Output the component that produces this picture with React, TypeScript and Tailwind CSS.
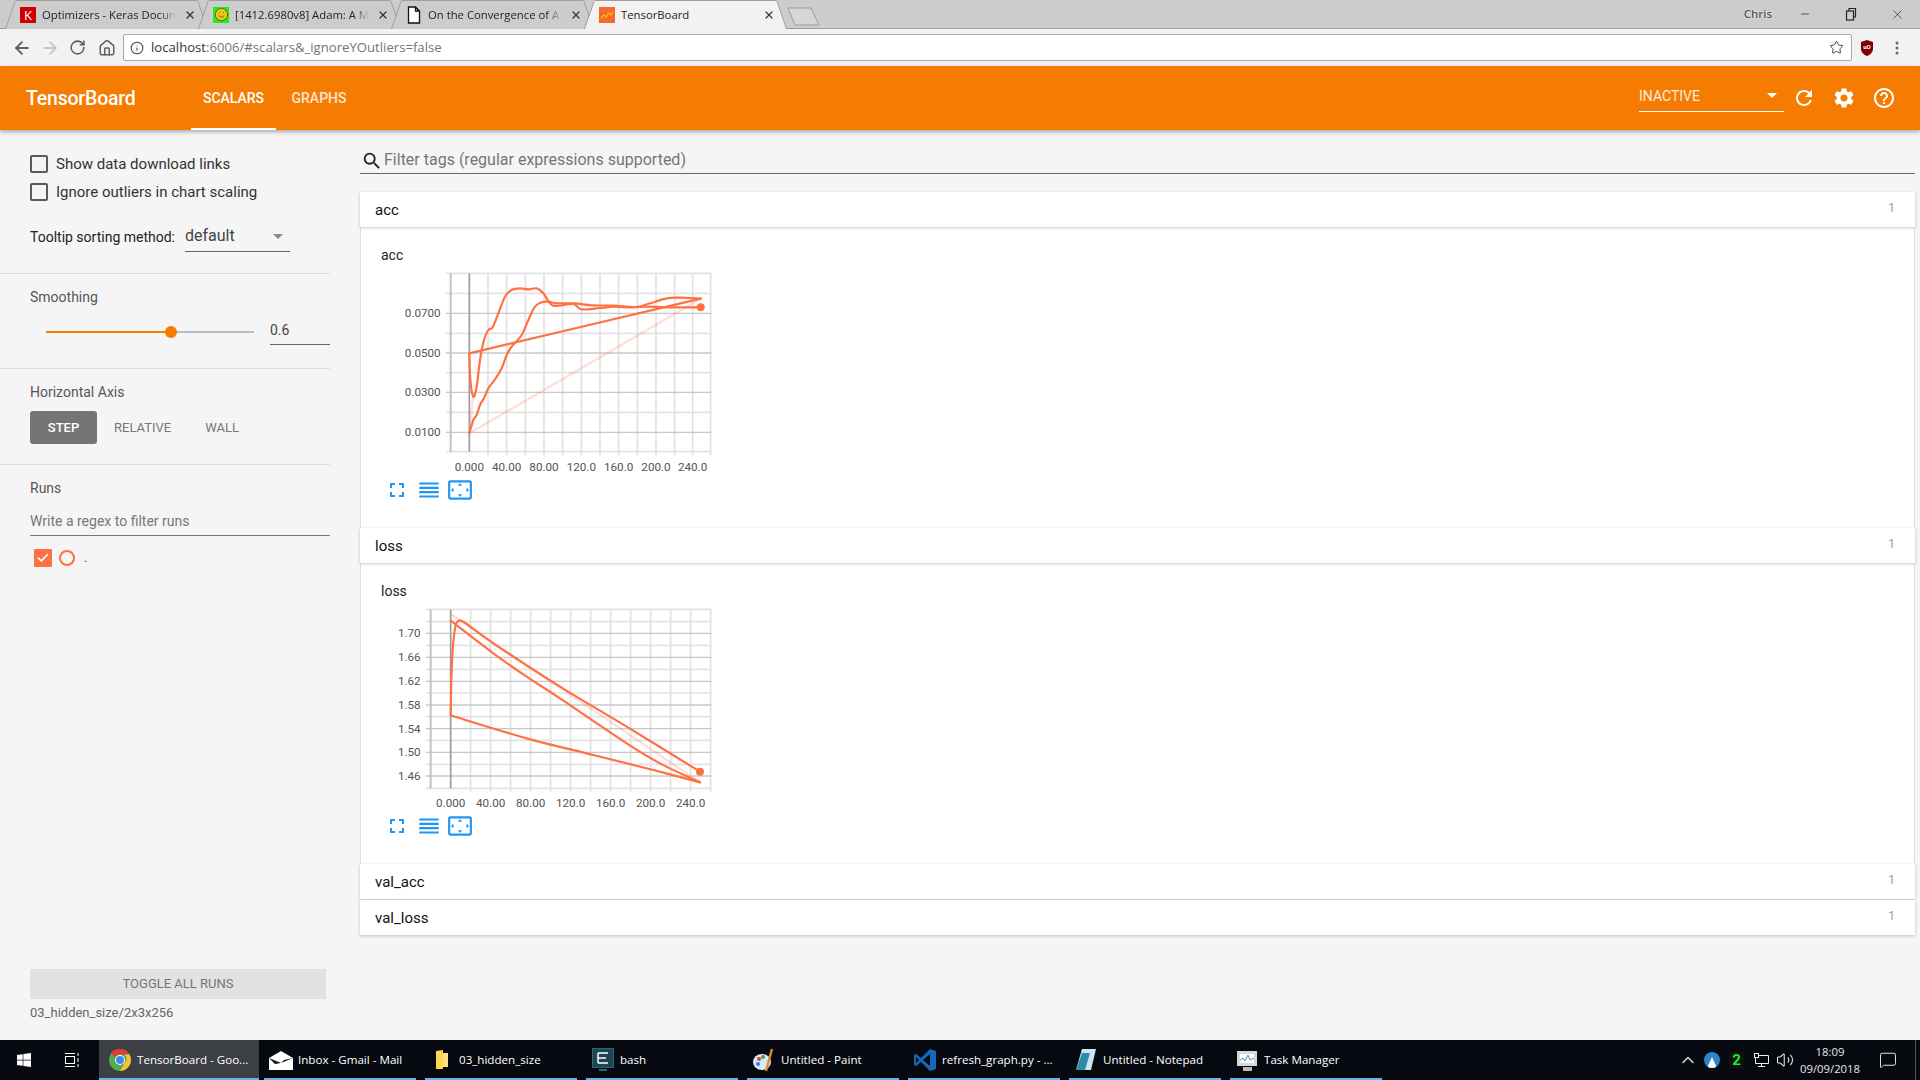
import React from "react";
import { ArrowLeft, ArrowRight, RotateCw, Home, Info, Star, X, Minus, Check, ChevronUp, Volume2, MessageSquare, Smile } from "lucide-react";
import { MdRefresh, MdSettings, MdHelpOutline, MdSearch, MdFullscreen, MdReorder, MdSettingsOverscan } from "react-icons/md";
import { FaWindows } from "react-icons/fa";

type P = [number, number];
const smooth = (pts: P[]) => {
  let d = `M${pts[0][0]} ${pts[0][1]}`;
  for (let i = 0; i < pts.length - 1; i++) {
    const p0 = pts[Math.max(0, i - 1)], p1 = pts[i], p2 = pts[i + 1], p3 = pts[Math.min(pts.length - 1, i + 2)];
    const c1 = [p1[0] + (p2[0] - p0[0]) / 6, p1[1] + (p2[1] - p0[1]) / 6];
    const c2 = [p2[0] - (p3[0] - p1[0]) / 6, p2[1] - (p3[1] - p1[1]) / 6];
    d += ` C${c1[0]} ${c1[1]} ${c2[0]} ${c2[1]} ${p2[0]} ${p2[1]}`;
  }
  return d;
};

const Favicon = ({ kind }: { kind: string }) => {
  if (kind === "k") return <div className="w-[16px] h-[16px] bg-[#d00000] text-white text-[13px] leading-[16px] text-center shrink-0">K</div>;
  if (kind === "smile") return <div className="w-[16px] h-[16px] bg-[#22ee22] flex items-center justify-center shrink-0"><Smile size={15} className="text-[#6b5a00] fill-[#e8c820]" strokeWidth={1.5} /></div>;
  if (kind === "doc") return (
    <svg width="16" height="18" viewBox="0 0 16 18" className="shrink-0"><path d="M2.5 1h7l4 4v12h-11z M9.5 1v4h4" fill="#fff" stroke="#111" strokeWidth="1.3" /></svg>
  );
  return (
    <svg width="16" height="16" viewBox="0 0 16 16" className="shrink-0"><rect width="16" height="16" fill="#f4692c" /><path d="M2 11l3-3 2 2 3-4 2 2 2-3" fill="none" stroke="#ffc107" strokeWidth="1.2" /></svg>
  );
};

const Tab = ({ title, icon, active, fade }: { title: string; icon: string; active?: boolean; fade?: boolean }) => (
  <div className={`relative w-[203px] h-[29px] -mr-[10px] shrink-0 flex items-center pl-[15px] pr-[12px] ${active ? "z-10" : ""}`}>
    <svg className="absolute inset-0" width="203" height="29" viewBox="0 0 203 29">
      <path d="M0.5 29 L10 1.5 Q10.5 0.5 12 0.5 L191 0.5 Q192.5 0.5 193 1.5 L202.5 29" fill={active ? "#f2f2f2" : "#cccccc"} stroke="#9e9e9e" />
    </svg>
    <div className="relative flex items-center w-full">
      <Favicon kind={icon} />
      <span className={`ml-[6px] mt-px text-[11.3px] text-[#222] whitespace-nowrap w-[134px] ${fade ? "[mask-image:linear-gradient(to_right,black_88%,transparent)]" : ""}`}>{title}</span>
      <X size={12} strokeWidth={2.4} className="ml-auto text-[#333]" />
    </div>
  </div>
);

const Chart = ({ vy, xs, xLabels, ys, minorYs, yLabels, vLines, left, lines, pale, dot, zero, xOff }: {
  vy: number; xs: number[]; xLabels: string[]; ys: number[]; minorYs: number[]; yLabels: string[]; vLines: number[]; left: number; lines: P[][]; pale: P[][]; dot: P; zero: number; xOff: number;
}) => {
  const top = minorYs[0], bottom = minorYs[minorYs.length - 1];
  return (
    <svg width="380" height="213" viewBox={`0 ${vy} 1140 639`} className="block">
      {minorYs.map((y) => <line key={y} x1={left - 15} x2={1054} y1={y} y2={y} stroke="#e3e3e3" strokeWidth="5" />)}
      {vLines.map((x) => <line key={x} x1={x} x2={x} y1={top} y2={bottom + 10} stroke="#e2e2e2" strokeWidth="5" />)}
      {ys.map((y) => <line key={y} x1={left - 15} x2={1054} y1={y} y2={y} stroke="#c8c8c8" strokeWidth="4" />)}
      <line x1={left} x2={left} y1={top} y2={bottom} stroke="#c2c2c2" strokeWidth="6" />
      <line x1={zero} x2={zero} y1={top} y2={bottom} stroke="#9a9a9a" strokeWidth="5" />
      {pale.map((l, i) => <polyline key={i} points={l.map((p) => p.join(",")).join(" ")} fill="none" stroke="#ff7043" strokeOpacity="0.22" strokeWidth="7" />)}
      {lines.map((l, i) => <path key={i} d={smooth(l)} fill="none" stroke="#ff7043" strokeWidth="6.5" strokeLinejoin="round" strokeLinecap="round" />)}
      <circle cx={dot[0]} cy={dot[1]} r="12" fill="#ff7043" />
      {ys.map((y, i) => <text key={y} x={left - 30} y={y + 12} textAnchor="end" fontSize="35" fill="#555">{yLabels[i]}</text>)}
      {xs.map((x, i) => <text key={x} x={x} y={bottom + xOff} textAnchor="middle" fontSize="35" fill="#555">{xLabels[i]}</text>)}
    </svg>
  );
};

const ChartIcons = () => (
  <div className="flex items-center h-[24px] pl-[25px] text-[#2196f3]">
    <MdFullscreen size={24} />
    <MdReorder size={26} className="ml-[7px]" />
    <MdSettingsOverscan size={26} className="ml-[5px]" />
  </div>
);

const SectionHead = ({ name }: { name: string }) => (
  <div className="h-[35px] bg-white flex items-center justify-between pl-[15px] pr-[20px] pt-px shadow-[0_1px_3px_rgba(0,0,0,0.22)] relative z-10">
    <span className="text-[15px] text-[#111]">{name}</span>
    <span className="text-[12px] text-[#7fae7f] -mt-[5px]">1</span>
  </div>
);

const Divider = () => <div className="h-px bg-[#dddddd] w-[330px]" />;

const TaskItem = ({ icon, label, active, w = 152, gap = 9, pl = 34 }: { icon: React.ReactNode; label: string; active?: boolean; w?: number; gap?: number; pl?: number }) => (
  <div className={`relative h-[40px] shrink-0 flex items-center ${active ? "bg-[#3c3f44]" : ""}`} style={{ width: w, marginRight: gap }}>
    <div className="flex justify-center shrink-0" style={{ width: pl }}>{icon}</div>
    <span className="text-[11.6px] text-white whitespace-nowrap font-['Open_Sans']">{label}</span>
    <div className="absolute left-0 right-0 bottom-0 h-[2px] bg-[#6db3ea]" />
  </div>
);

export default function App() {
  const accX = [328, 440, 552, 664, 776, 888, 998];
  const lossX = [272, 392, 512, 632, 752, 872, 992];
  const labels = ["0.000", "40.00", "80.00", "120.0", "160.0", "200.0", "240.0"];
  const acc1: P[] = [[328, 730], [340, 690], [350, 675], [360, 645], [372, 625], [385, 595], [405, 568], [425, 535], [440, 495], [455, 470], [485, 435], [505, 390], [525, 350], [545, 337], [565, 335], [590, 340], [640, 340], [700, 346], [760, 347], [830, 351], [870, 340], [920, 325], [960, 323], [1022, 326]];
  const acc2: P[] = [[328, 490], [331, 570], [340, 620], [350, 590], [360, 510], [372, 450], [385, 420], [398, 412], [415, 370], [435, 320], [455, 300], [480, 295], [505, 298], [530, 295], [550, 310], [570, 340], [590, 348], [640, 342], [665, 358], [720, 354], [760, 350], [800, 352], [860, 350], [920, 352], [1022, 352]];
  return (
    <div className="w-[1920px] h-[1080px] overflow-hidden flex flex-col bg-[#f5f5f5] font-['Roboto',sans-serif]">
      {/* tab strip */}
      <div className="h-[29px] bg-[#cccccc] flex items-start pl-[5px] shrink-0 border-b border-[#9e9e9e] font-['Open_Sans',sans-serif] relative">
        <Tab title="Optimizers - Keras Docum" icon="k" fade />
        <Tab title="[1412.6980v8] Adam: A M" icon="smile" fade />
        <Tab title="On the Convergence of A" icon="doc" fade />
        <Tab title="TensorBoard" icon="tb" active />
        <svg width="36" height="29" viewBox="0 0 36 29" className="ml-[8px] mt-[0px] shrink-0 relative">
          <path d="M3 8 L26 8 L34 25 L10 25 Z" fill="#d6d6d6" stroke="#9e9e9e" />
        </svg>
        <div className="ml-auto flex items-center h-[28px] text-[#333] shrink-0">
          <span className="text-[11.5px] font-semibold text-[#555] mr-[27px] [text-shadow:0_0_2px_#fff]">Chris</span>
          <Minus size={12} strokeWidth={1.5} className="mr-[34px]" />
          <svg width="12" height="14" viewBox="0 0 12 14" className="mr-[33px]" fill="none" stroke="#222" strokeWidth="1.2"><rect x="1.5" y="4" width="7" height="9" /><path d="M4 4V1.5h6.5V10H8.5" /></svg>
          <X size={15} strokeWidth={1.2} className="mr-[15px]" />
        </div>
      </div>
      {/* toolbar */}
      <div className="h-[37px] bg-[#f2f2f2] flex items-center shrink-0 pl-[12px] pr-[12px]">
        <ArrowLeft size={20} strokeWidth={2.2} className="text-[#5f5f5f]" />
        <ArrowRight size={20} strokeWidth={2.2} className="text-[#c6c6c6] ml-[8px]" />
        <RotateCw size={17} strokeWidth={2.2} className="text-[#5f5f5f] ml-[9px]" />
        <Home size={18} strokeWidth={2} className="text-[#5f5f5f] ml-[12px]" />
        <div className="ml-[7px] w-[1729px] h-[27px] bg-white border border-[#a9a9a9] rounded-[2px] flex items-center pl-[6px] pr-[7px] font-['Open_Sans',sans-serif]">
          <Info size={14} strokeWidth={1.8} className="text-[#444]" />
          <span className="ml-[7px] text-[13.15px] text-[#333]">localhost<span className="text-[#757575]">:6006/#scalars&amp;_ignoreYOutliers=false</span></span>
          <Star size={15} strokeWidth={1.6} className="ml-auto text-[#444]" />
        </div>
        <svg width="14" height="18" viewBox="0 0 14 18" className="ml-[8px]"><path d="M7 1l6 2v7c0 3-3 6-6 7-3-1-6-4-6-7V3z" fill="#800000" /><text x="7" y="10" textAnchor="middle" fontSize="6" fill="#fff" fontWeight="700">uO</text></svg>
        <svg width="4" height="14" viewBox="0 0 4 14" className="ml-[21px]" fill="#666"><circle cx="2" cy="2" r="1.5" /><circle cx="2" cy="7" r="1.5" /><circle cx="2" cy="12" r="1.5" /></svg>
      </div>
      {/* orange header */}
      <div className="h-[64px] bg-[#f57c00] flex items-stretch shrink-0 shadow-[0_2px_4px_rgba(0,0,0,0.3)] relative z-20 text-white">
        <div className="pl-[26px] w-[191px] flex items-center text-[19.5px] font-medium tracking-[-0.2px] pt-px">TensorBoard</div>
        <div className="w-[85px] flex items-center justify-center text-[14px] font-medium border-b-[2px] border-white pt-[2px]">SCALARS</div>
        <div className="w-[86px] flex items-center justify-center text-[14px] font-medium text-white/80 pt-px">GRAPHS</div>
        <div className="ml-auto flex items-center pr-[24px]">
          <div className="w-[145px] h-[32px] border-b border-white flex items-center justify-between text-[14px] text-white/85 -mt-[4px]">
            <span className="mt-[2px]">INACTIVE</span>
            <span className="w-0 h-0 border-l-[5px] border-r-[5px] border-t-[5px] border-l-transparent border-r-transparent border-t-white mr-[7px]" />
          </div>
          <MdRefresh size={24} className="ml-[8px]" />
          <MdSettings size={24} className="ml-[16px]" />
          <MdHelpOutline size={24} className="ml-[16px]" />
        </div>
      </div>
      {/* body */}
      <div className="flex-1 flex min-h-0">
        <aside className="w-[330px] flex flex-col shrink-0 text-[#333]">
          <div className="pl-[30px] pt-[25px] h-[143px]">
            <div className="flex items-center h-[18px] gap-[8px]">
              <div className="w-[18px] h-[18px] border-2 border-[#5a5a5a] rounded-[2px]" />
              <span className="text-[15px] mt-px">Show data download links</span>
            </div>
            <div className="flex items-center h-[18px] gap-[8px] mt-[10px]">
              <div className="w-[18px] h-[18px] border-2 border-[#5a5a5a] rounded-[2px]" />
              <span className="text-[15px] mt-px">Ignore outliers in chart scaling</span>
            </div>
            <div className="flex items-center mt-[23px] h-[30px]">
              <span className="text-[14px] w-[155px] text-[#222] -mt-[4px]">Tooltip sorting method:</span>
              <div className="w-[105px] h-[30px] border-b border-[#666] flex items-center justify-between -mt-[4px]">
                <span className="text-[16px] text-[#444] -mt-[2px]">default</span>
                <span className="w-0 h-0 border-l-[5px] border-r-[5px] border-t-[5px] border-l-transparent border-r-transparent border-t-[#888] mr-[7px]" />
              </div>
            </div>
          </div>
          <Divider />
          <div className="pl-[30px] h-[94px] pt-[13px]">
            <div className="text-[14px] leading-[20px] text-[#555]">Smoothing</div>
            <div className="flex items-start h-[32px] mt-[9px]">
              <div className="ml-[16px] w-[208px] h-[2px] bg-[#bdbdbd] relative mt-[15px]">
                <div className="h-[2px] w-[125px] bg-[#f57c00]" />
                <div className="absolute left-[119px] -top-[5px] w-[12px] h-[12px] rounded-full bg-[#f57c00]" />
              </div>
              <div className="ml-[16px] w-[60px] h-[29px] border-b border-[#666] text-[14px] text-[#444] leading-[28px]">0.6</div>
            </div>
          </div>
          <Divider />
          <div className="pl-[30px] h-[95px] pt-[13px]">
            <div className="text-[14px] leading-[20px] text-[#555]">Horizontal Axis</div>
            <div className="flex items-center mt-[9px] text-[13px] text-[#777]">
              <div className="w-[67px] h-[33px] bg-[#757575] rounded-[3px] text-white font-medium flex items-center justify-center">STEP</div>
              <span className="ml-[17px]">RELATIVE</span>
              <span className="ml-[34px]">WALL</span>
            </div>
          </div>
          <Divider />
          <div className="pl-[30px] pt-[13px]">
            <div className="text-[14px] leading-[20px] text-[#555]">Runs</div>
            <div className="h-[38px] border-b border-[#777] text-[14px] text-[#777] flex items-end pb-[3px] pt-[5px]">Write a regex to filter runs</div>
            <div className="flex items-center mt-[13px] pl-[4px]">
              <div className="w-[18px] h-[18px] bg-[#ff7043] rounded-[1px] flex items-center justify-center"><Check size={14} strokeWidth={3} className="text-white" /></div>
              <div className="ml-[7px] w-[16px] h-[16px] rounded-full border-2 border-[#ff7043]" />
              <span className="ml-[9px] text-[12px] text-[#444]">.</span>
            </div>
          </div>
          <div className="mt-auto pl-[30px] pb-[18px]">
            <div className="w-[296px] h-[30px] bg-[#e2e2e2] rounded-[1px] flex items-center justify-center text-[13px] text-[#757575]">TOGGLE ALL RUNS</div>
            <div className="text-[13px] text-[#666] mt-[5px] leading-[18px]">03_hidden_size/2x3x256</div>
          </div>
        </aside>
        <main className="w-[1585px] pl-[30px] flex flex-col">
          <div className="flex items-center h-[25px] mt-[18px] border-b border-[#666] box-content">
            <MdSearch size={22} className="text-[#222] ml-[1px] shrink-0" />
            <span className="text-[16px] text-[#757575] ml-[1px] -mt-[2px]">Filter tags (regular expressions supported)</span>
          </div>
          <div className="mt-[18px]">
            <SectionHead name="acc" />
            <div className="h-[301px] bg-white border-x border-[#e0e0e0]">
              <div className="ml-[-1px]">
                <div className="pt-[18px] pl-[21px] text-[14px] leading-[20px] text-[#222]">acc</div>
                <Chart vy={225} xOff={58} xs={accX} xLabels={labels} ys={[370, 489, 607, 727]} minorYs={[250, 310, 430, 548, 667, 785]} yLabels={["0.0700", "0.0500", "0.0300", "0.0100"]} vLines={[384, 440, 496, 552, 608, 664, 720, 776, 832, 888, 944, 998, 1052]} left={272} zero={328} lines={[[[328, 490], [1022, 326]], acc1, acc2]} pale={[[[328, 730], [1022, 326]], [[328, 730], [340, 610]]]} dot={[1022, 352]} />
                <ChartIcons />
              </div>
            </div>
            <SectionHead name="loss" />
            <div className="h-[301px] bg-white border-x border-[#e0e0e0]">
              <div className="ml-[-1px]">
                <div className="pt-[18px] pl-[21px] text-[14px] leading-[20px] text-[#222]">loss</div>
                <Chart vy={93} xOff={55} xs={lossX} xLabels={labels} ys={[190, 262, 334, 405, 476, 547, 618]} minorYs={[118, 155, 226, 298, 369, 440, 511, 583, 655]} yLabels={["1.70", "1.66", "1.62", "1.58", "1.54", "1.50", "1.46"]} vLines={[332, 392, 452, 512, 572, 632, 692, 752, 812, 872, 932, 992, 1052]} left={212} zero={272} lines={[
                  [[272, 436], [500, 505], [700, 555], [880, 600], [1020, 637]],
                  [[272, 436], [274, 330], [278, 240], [286, 170], [298, 152], [320, 162], [400, 220], [600, 350], [800, 470], [1020, 605]],
                  [[272, 152], [400, 250], [500, 320], [600, 385], [800, 520], [900, 580], [1020, 637]],
                ]} pale={[[[272, 132], [1020, 637]]]} dot={[1020, 605]} />
                <ChartIcons />
              </div>
            </div>
            <SectionHead name="val_acc" />
            <div className="mt-px"><SectionHead name="val_loss" /></div>
          </div>
        </main>
      </div>
      {/* taskbar */}
      <div className="h-[40px] bg-[#060a10] flex items-center shrink-0 text-white relative">
        <div className="w-[48px] flex justify-center"><FaWindows size={16} /></div>
        <div className="w-[47px] flex justify-center mr-[4px]">
          <svg width="16" height="16" viewBox="0 0 16 16" fill="none" stroke="#fff" strokeWidth="1"><rect x="1.5" y="4.5" width="9" height="7" /><path d="M1 1.5h10M1 14.5h10M14 1v3M14 6v4M14 12v3" /></svg>
        </div>
        <TaskItem active w={160} gap={5} pl={38} label="TensorBoard - Goo..." icon={
          <svg width="22" height="22" viewBox="0 0 22 22" className="ml-[4px]"><circle cx="11" cy="11" r="11" fill="#4caf50" /><path d="M11 0a11 11 0 0 1 9.5 5.5H11a5.5 5.5 0 0 0-5 3L2 3.5A11 11 0 0 1 11 0z" fill="#e53935" /><path d="M20.5 5.5A11 11 0 0 1 11 22l4.5-8a5.5 5.5 0 0 0 0-8.5z" fill="#fbc02d" /><circle cx="11" cy="11" r="5" fill="#fff" /><circle cx="11" cy="11" r="4" fill="#4285f4" /></svg>} />
        <TaskItem label="Inbox - Gmail - Mail" icon={
          <svg width="24" height="19" viewBox="0 0 24 19"><path d="M0 7L12 0l12 7v12H0z" fill="#fff" /><path d="M0 7l12 5-6 1zM12 12l12-5-9 2z" fill="#111" /></svg>} />
        <TaskItem label="03_hidden_size" icon={
          <svg width="14" height="22" viewBox="0 0 14 22"><path d="M1 2l7-1v19H1z" fill="#ffd54f" /><path d="M8 4h5v14H8z" fill="#ffe082" /></svg>} />
        <TaskItem label="bash" icon={
          <svg width="22" height="24" viewBox="0 0 22 24"><rect x="0.5" y="0.5" width="21" height="19" fill="#1c4650" stroke="#2b6a74" /><path d="M6 5h10M6 10h8M6 15h10M6 5v10" stroke="#fff" strokeWidth="1.5" fill="none" /><path d="M7 22h8" stroke="#2b6a74" strokeWidth="2" /></svg>} />
        <TaskItem label="Untitled - Paint" icon={
          <svg width="24" height="24" viewBox="0 0 24 24"><ellipse cx="10" cy="14" rx="9" ry="8" fill="#d8e8f4" /><circle cx="7" cy="11" r="2" fill="#e53935" /><circle cx="11" cy="9" r="2" fill="#43a047" /><circle cx="6" cy="16" r="2" fill="#1e88e5" /><path d="M20 1l-6 22" stroke="#e08a2e" strokeWidth="2.4" /></svg>} />
        <TaskItem label="refresh_graph.py - ..." icon={
          <svg width="24" height="24" viewBox="0 0 24 24"><path d="M17 1L8 10 3 6 1 7v10l2 1 5-4 9 9 6-2V3z" fill="#1668b8" /><path d="M17 6v12l-7-6z" fill="#060a10" /><path d="M3 9l3 3-3 3z" fill="#060a10" /></svg>} />
        <TaskItem label="Untitled - Notepad" icon={
          <svg width="22" height="24" viewBox="0 0 22 24"><path d="M7 1h14l-5 21H1z" fill="#cfe6f2" /><path d="M7 5L1 22h9l5-17z" fill="#2a8ea8" /></svg>} />
        <TaskItem label="Task Manager" icon={
          <svg width="24" height="24" viewBox="0 0 24 24"><rect x="2" y="3" width="20" height="15" fill="#d8d8d8" /><rect x="5" y="6" width="14" height="9" fill="#fff" /><path d="M5 12l3-2 2 3 3-6 2 5 4-2" stroke="#4a90c8" fill="none" /><rect x="8" y="19" width="9" height="4" fill="#bbb" /></svg>} />
        <div className="ml-auto flex items-center h-[40px] text-[#e6e6e6]">
          <ChevronUp size={20} strokeWidth={1.6} className="mr-[6px]" />
          <div className="w-[16px] h-[16px] rounded-full bg-[#2a86c8] overflow-hidden flex items-end justify-center mr-[9px]"><div className="w-0 h-0 border-l-[5px] border-r-[5px] border-b-[11px] border-l-transparent border-r-transparent border-b-white" /></div>
          <div className="w-[15px] h-[17px] bg-[#111] text-[#22ee22] text-[15px] font-bold leading-[17px] text-center mr-[9px]">2</div>
          <svg width="16" height="16" viewBox="0 0 16 16" fill="none" stroke="#eee" className="mr-[7px]"><rect x="1.5" y="1.5" width="4" height="4" /><path d="M5.5 3.5h10v8h-13v-6M8.5 11.5v3M5 14.5h7" /></svg>
          <Volume2 size={18} strokeWidth={1.4} />
          <div className="w-[72px] text-center text-[11.3px] leading-[17px] font-['Open_Sans']">
            <div>18:09</div>
            <div>09/09/2018</div>
          </div>
          <div className="ml-[6px] w-[32px] flex justify-center"><MessageSquare size={18} strokeWidth={1.3} /></div>
          <div className="w-px h-[40px] bg-[#555] ml-[11px] mr-[4px]" />
        </div>
      </div>
    </div>
  );
}
